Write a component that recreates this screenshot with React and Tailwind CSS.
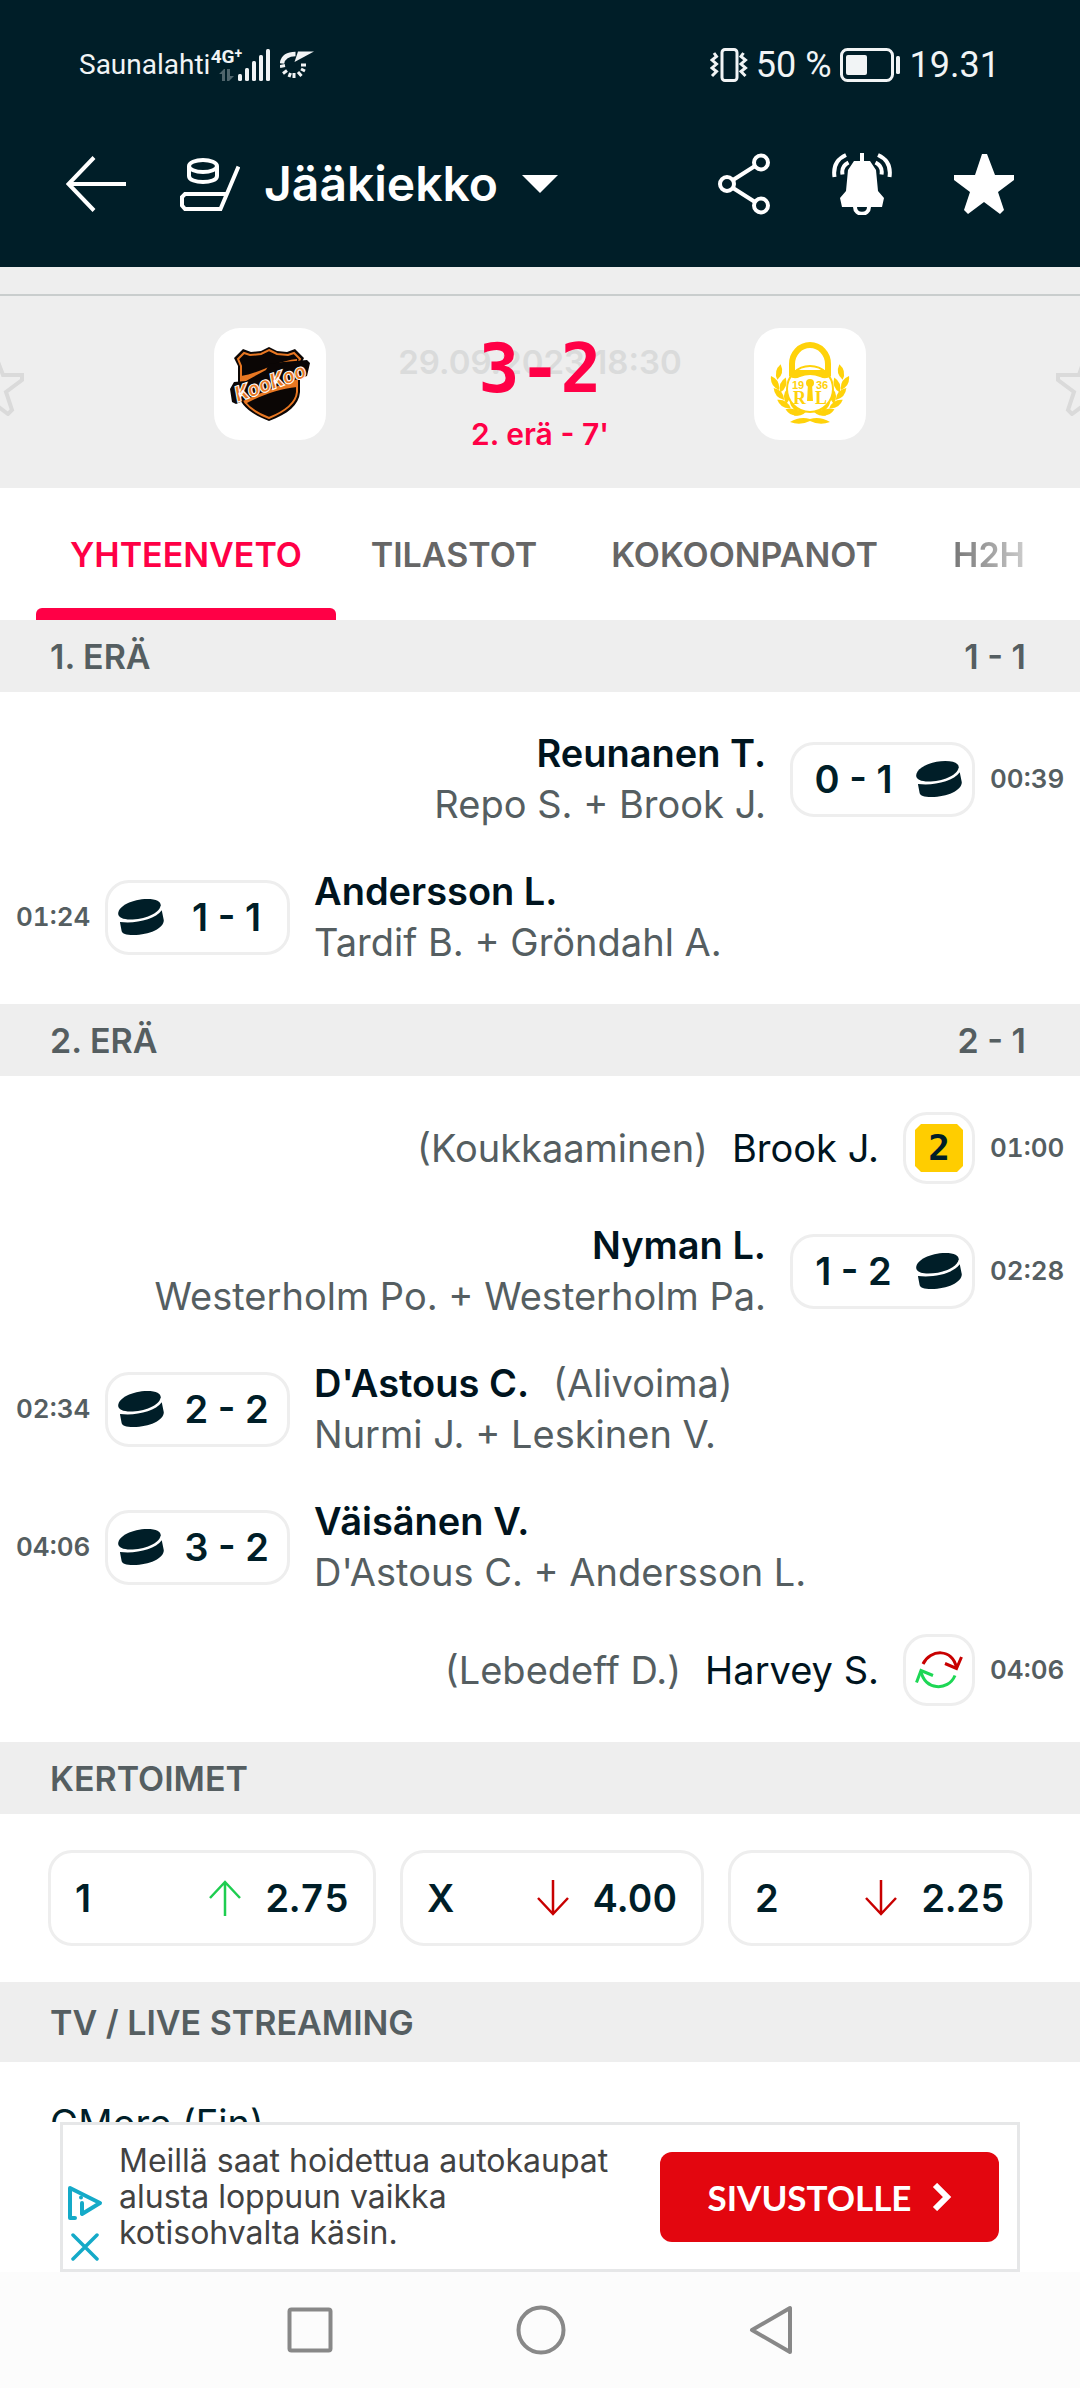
import React from "react";

const starPath =
  "M28 0h5l8 21h19v5L44 38l6 18-4 4-16-12-16 12-4-4 6-18L0 26v-5h21z";

function StatusBar() {
  return (
    <div className="flex h-[130px] items-center justify-between pr-20 pl-[79px] font-[Roboto,sans-serif] text-[#f1f4f5]">
      <div className="flex items-center">
        <span className="text-[28px] leading-8">Saunalahti</span>
        <span className="ml-1 flex h-8 w-6 flex-col items-center text-[19px] leading-4 font-bold">
          <span className="flex">
            4G<span className="text-sm leading-2">+</span>
          </span>
          <svg className="mt-1 h-3 w-4 text-[#50656c]" viewBox="0 0 16 12" fill="currentColor" aria-hidden="true">
            <path d="M1 5 6 0h1v12H4V5zM9 0h3v7h4l-5 5H9z" />
          </svg>
        </span>
        <svg className="h-8 w-[34px]" viewBox="0 0 34 32" fill="currentColor" aria-label="Signaali">
          <rect x="0" y="25" width="4" height="7" rx="1.5" />
          <rect x="7" y="19" width="4" height="13" rx="1.5" />
          <rect x="14" y="12" width="4" height="20" rx="1.5" />
          <rect x="21" y="6" width="4" height="26" rx="1.5" />
          <rect x="28" y="0" width="4" height="32" rx="1.5" />
        </svg>
        <svg className="ml-2 h-7 w-[34px]" viewBox="0 0 34 28" aria-hidden="true">
          <path d="M2 12.500C3 6 8 3 15.500 3" stroke="currentColor" strokeWidth="4.500" fill="none" />
          <path d="M18 0.500h16L14.500 11z" fill="currentColor" />
          <g stroke="currentColor" strokeWidth="3">
            <path d="M0 15.500 5 14.500M3 22.500 7 19.500M9 26l1.500-4M14 27v-5M21.500 25 18 21M25 20l-4-2M26 14h-5" />
          </g>
        </svg>
      </div>
      <div className="flex items-center text-4xl leading-10">
        <svg className="h-[34px] w-[38px]" viewBox="0 0 38 34" fill="none" stroke="currentColor" aria-label="Värinä">
          <rect x="12" y="1.500" width="15" height="31" rx="3" strokeWidth="3" />
          <path d="M4 5l2.500 3.500L2 12l4.500 4L2 20l4.500 3.500L2 28M33.500 5 31 8.500 35.500 12 31 16l4.500 4-4.500 3.500 4.500 4.500" strokeWidth="3" />
        </svg>
        <span className="ml-2">50 %</span>
        <svg className="ml-2 h-[34px] w-[62px]" viewBox="0 0 62 34" fill="none" aria-label="Akku">
          <rect x="1.500" y="1.500" width="51" height="31" rx="6" stroke="currentColor" strokeWidth="3" />
          <rect x="6" y="7" width="21" height="20" rx="2" fill="currentColor" />
          <rect x="56" y="8" width="4" height="18" rx="1.500" fill="currentColor" />
        </svg>
        <span className="ml-2">19.31</span>
      </div>
    </div>
  );
}

function Toolbar() {
  return (
    <div className="flex h-[108px] items-center px-[66px] text-white">
      <button type="button" aria-label="Takaisin">
        <svg className="h-14 w-[60px]" viewBox="0 0 60 56" fill="none" stroke="currentColor" strokeWidth="4">
          <path d="M28 1.500 2.500 28 28 54.500M3 28h57" />
        </svg>
      </button>
      <button type="button" className="ml-[54px] flex items-center">
        <svg className="h-[53px] w-[60px]" viewBox="0 0 60 53" fill="none" stroke="currentColor" strokeWidth="4" aria-hidden="true">
          <ellipse cx="23" cy="8" rx="14" ry="6" />
          <path d="M9 8v10c0 8 28 8 28 0V8" />
          <path d="M58.500 8.500 40.500 51H5l-3-3.500V39l3-3h41" />
        </svg>
        <span className="ml-6 text-5xl leading-none font-semibold">Jääkiekko</span>
        <svg className="ml-6 h-[18px] w-9" viewBox="0 0 36 18" fill="currentColor" aria-hidden="true">
          <path d="M0 0h36L18 18z" />
        </svg>
      </button>
      <div className="ml-auto flex items-center gap-[62px]">
        <button type="button" aria-label="Jaa">
          <svg className="h-[62px] w-[52px]" viewBox="0 0 52 62" fill="none" stroke="currentColor" strokeWidth="4">
            <circle cx="9" cy="31" r="7" />
            <circle cx="43" cy="9.500" r="7" />
            <circle cx="43" cy="52.500" r="7" />
            <path d="m15 27 22-14M15 35l22 14" />
          </svg>
        </button>
        <button type="button" aria-label="Ilmoitukset">
          <svg className="h-[62px] w-[60px]" viewBox="0 0 60 62" fill="none" stroke="currentColor" strokeWidth="4">
            <path
              d="M28 0h4v8h6l6 9 2 21 6 7-2 9H10l-2-9 6-7 2-21 6-9h6z"
              fill="currentColor"
              stroke="none"
            />
            <path d="M23 54c0 9 14 9 14 0" />
            <path d="M14 2C5 6 1 14 2.500 24M46 2c9 4 13 12 11.500 22M16.500 9.500c-5 2.500-7 6.500-6 12M43.500 9.500c5 2.500 7 6.500 6 12" />
          </svg>
        </button>
        <button type="button" aria-label="Suosikki">
          <svg className="h-[62px] w-[60px]" viewBox="0 0 60 60" fill="currentColor">
            <path d={starPath} />
          </svg>
        </button>
      </div>
    </div>
  );
}

function KooKooLogo() {
  return (
    <svg className="h-20 w-20" viewBox="0 0 80 80" role="img" aria-label="KooKoo">
      <path d="M39 3l8 4 10 1 8-3 9 9-4 8v26c-1 13-12 22-31 29C20 70 9 60 8 48V22L4 14l9-9 8 3 10-1z" fill="#0b0605" />
      <path d="M39 6l8 4 11 1 6-2 6 6-3 7v26c-1 11-11 19-28 26C21 67 12 58 11 48V22l-3-7 6-6 6 2 11-1z" fill="none" stroke="#e87722" strokeWidth="2" />
      <path d="M11 32C28 30 46 17 67 15v28C48 45 30 52 15 60z" fill="#e87722" />
      <path d="m0 45 4-7 12-1 20-11 3-6 14-2 24-2 3 3-3 13-24 8-22 9-25 11-4-2z" fill="#0b0605" />
      <text
        x="40"
        y="46"
        transform="rotate(-20 40 38)"
        textAnchor="middle"
        fontFamily="Roboto, sans-serif"
        fontStyle="italic"
        fontWeight="900"
        fontSize="22"
        fill="#e87722"
        stroke="#fff"
        strokeWidth="1"
      >
        KooKoo
      </text>
    </svg>
  );
}

function LukkoLogo() {
  const leaves = [
    [9, 30, -78],
    [5, 41, 60],
    [9, 52, 48],
    [14, 62, 32],
    [23, 70, 20],
    [13, 43, -70],
    [17, 54, -85],
    [24, 63, 60],
    [31, 70, -25],
  ];
  const side = leaves.map(([x, y, r]) => (
    <path key={`${x}-${y}`} d="M-8 0Q0-6 8 0Q0 6-8 0z" transform={`translate(${x} ${y}) rotate(${r})`} />
  ));
  return (
    <svg className="h-[84px] w-20" viewBox="0 0 80 84" fill="#ffd20a" role="img" aria-label="Lukko">
      <g>{side}</g>
      <g transform="translate(80 0) scale(-1 1)">{side}</g>
      <path d="M20 80q10-6 20-3 10-3 20 3-10 4-20-1-10 5-20 1z" />
      <circle cx="40" cy="47" r="23" fill="#fff" stroke="#ffd20a" strokeWidth="2" />
      <path d="M22 31V22a18 19 0 0 1 36 0v9" fill="none" stroke="#ffd20a" strokeWidth="6" />
      <path d="M19 28h42v6q-5 4-11 1-10-4-20 0-6 3-11-1z" />
      <circle cx="40" cy="41" r="4" />
      <path d="M38 42h4l1 17h-6z" />
      <g fontFamily="Liberation Sans, sans-serif" fontWeight="700" fontSize="11">
        <text x="22" y="47">19</text>
        <text x="46" y="47">36</text>
      </g>
      <g fontFamily="Liberation Serif, serif" fontWeight="700" fontSize="18">
        <text x="23" y="62">R</text>
        <text x="45" y="62">L</text>
      </g>
    </svg>
  );
}

function OutlineStar({ className }) {
  return (
    <svg className={className} viewBox="-2 -2 64 64" fill="none" stroke="#dadada" strokeWidth="4" aria-hidden="true">
      <path d={starPath} />
    </svg>
  );
}

function ScoreHeader() {
  return (
    <div className="bg-[#eeeeee] pt-[27px]">
      <div className="relative flex justify-center overflow-hidden border-t-2 border-[#c9cdcd] pt-8 pb-12">
        <OutlineStar className="absolute top-14 -left-10 h-16 w-16" />
        <div className="grid h-28 w-28 place-items-center rounded-[26px] bg-white">
          <KooKooLogo />
        </div>
        <div className="relative flex h-28 w-[428px] flex-col items-center text-[#ff0046]">
          <span className="absolute top-4 text-[33px] leading-9 font-semibold text-[#dadbdb]">29.09.2023 18:30</span>
          <strong className="relative pt-2 font-['DejaVu_Sans_Mono',monospace] text-[68px] leading-[66px] font-bold">3-2</strong>
          <span className="pt-3 text-[30px] leading-10 font-semibold">2. erä - 7'</span>
        </div>
        <div className="grid h-28 w-28 place-items-center rounded-[26px] bg-white">
          <LukkoLogo />
        </div>
        <OutlineStar className="absolute top-14 -right-10 h-16 w-16" />
      </div>
    </div>
  );
}

function Tabs() {
  return (
    <nav className="flex h-[132px] overflow-hidden bg-white pl-9 text-[34px] font-semibold text-[#666666]">
      <button type="button" className="flex w-[300px] shrink-0 flex-col items-center text-[#ff0046]" aria-current="page">
        <span className="flex flex-1 items-center pt-3">YHTEENVETO</span>
        <span className="h-3 w-full rounded-t-md bg-[#ff0046]" />
      </button>
      <button type="button" className="w-[236px] shrink-0">TILASTOT</button>
      <button type="button" className="w-[345px] shrink-0">KOKOONPANOT</button>
      <button type="button" className="w-36 shrink-0">
        <span className="bg-linear-to-r from-[#777777] to-[#cccccc] bg-clip-text text-transparent">H2H</span>
      </button>
    </nav>
  );
}

function SectionHeader({ title, result }) {
  return (
    <div className="flex h-[72px] items-center justify-between bg-[#eeeeee] pr-[54px] pl-[50px] text-[34px] font-semibold text-[#555e61]">
      <h2>{title}</h2>
      {result && <span>{result}</span>}
    </div>
  );
}

function Puck() {
  return (
    <svg className="h-9 w-[46px] shrink-0" viewBox="0 0 133 105" fill="currentColor" aria-label="Maali">
      <path d="M0 44C-2 22 40 0 85 0c27 0 39 8 39 18-3 24-49 42-89 42C14 60 1 54 0 44z" />
      <path d="M5 67c45 6 103-7 122-34l6 29c0 24-43 43-88 43-23 0-33-4-35-12z" />
    </svg>
  );
}

function Swap() {
  return (
    <svg className="h-[38px] w-12" viewBox="0 0 48 38" fill="none" strokeWidth="3" aria-label="Vaihto">
      <g stroke="#c80000">
        <path d="M8 13C15-2 38-3 41.500 17" />
        <path d="m30 12.500 11.500 5L46.500 6" />
      </g>
      <g stroke="#1ed755">
        <path d="M40 24.500C33 41 9 39 6 20" />
        <path d="m18 24.500-12-5L1.500 31.500" />
      </g>
    </svg>
  );
}

function Penalty() {
  return (
    <span className="grid h-12 w-12 place-items-center bg-[#ffcd00] font-['DejaVu_Sans_Mono',monospace] text-4xl leading-none font-bold text-[#001e28] [clip-path:polygon(6px_0,42px_0,100%_6px,100%_42px,42px_100%,6px_100%,0_42px,0_6px)]">
      2
    </span>
  );
}

function EventTime({ away, children }) {
  return (
    <time className={`w-[74px] text-[26px] leading-8 font-semibold text-[#555e61] tabular-nums ${away ? "text-right" : "text-left"}`}>
      {children}
    </time>
  );
}

function GoalRow({ away, time, score, name, note, assists }) {
  return (
    <li className={`flex h-[138px] items-center ${away ? "flex-row-reverse pr-4" : "pl-4"}`}>
      <EventTime away={away}>{time}</EventTime>
      <div
        className={`flex h-[75px] w-[185px] items-center gap-3 rounded-3xl border-3 border-[#eeeeee] px-2.5 text-[#001e28] ${
          away ? "mr-[15px] flex-row-reverse" : "ml-[15px]"
        }`}
      >
        <Puck />
        <span className="flex-1 text-center text-[38px] leading-none font-semibold whitespace-nowrap">{score}</span>
      </div>
      <div className={`text-[38px] leading-[51px] text-[#555e61] ${away ? "mr-6 text-right" : "ml-6"}`}>
        <p>
          <span className="font-semibold text-[#00141e]">{name}</span>
          {note && <span className="ml-6">{note}</span>}
        </p>
        <p>{assists}</p>
      </div>
    </li>
  );
}

function EventRow({ time, note, name, children }) {
  return (
    <li className="flex h-[108px] flex-row-reverse items-center pr-4">
      <EventTime away>{time}</EventTime>
      <div className="mr-[15px] grid h-[72px] w-[72px] place-items-center rounded-3xl border-3 border-[#eeeeee]">{children}</div>
      <p className="mr-6 text-[38px] leading-[51px] text-[#00141e]">
        <span className="mr-6 text-[#555e61]">{note}</span>
        {name}
      </p>
    </li>
  );
}

function Odd({ label, value, up }) {
  return (
    <button
      type="button"
      className="flex h-24 items-center rounded-3xl border-3 border-[#eeeeee] px-6 text-[38px] leading-none font-semibold text-[#001e28]"
    >
      <span className="mr-auto">{label}</span>
      <svg
        className={`h-9 w-8 ${up ? "text-[#1ecd50]" : "rotate-180 text-[#c80000]"}`}
        viewBox="0 0 32 36"
        fill="none"
        stroke="currentColor"
        strokeWidth="2.500"
        aria-hidden="true"
      >
        <path d="M16 36V2M1 18 16 2l15 16" />
      </svg>
      <span className="ml-6 tabular-nums">{value}</span>
    </button>
  );
}

function Ad() {
  return (
    <aside className="mx-[60px] flex h-[150px] items-center border-3 border-[#e6e7e8] bg-white pr-[18px]">
      <div className="mr-3 flex w-11 shrink-0 flex-col items-center gap-3 self-end pb-2 text-[#14aac8]">
        <button type="button" aria-label="Mainosvalinnat">
          <svg className="h-9 w-9" viewBox="0 0 36 36" fill="none" stroke="currentColor" strokeWidth="4" strokeLinejoin="round" strokeLinecap="round">
            <path d="M8 33H3V3l30 15-18 11V18" />
            <path d="M14 12.500v.1" />
          </svg>
        </button>
        <button type="button" aria-label="Sulje mainos">
          <svg className="h-7 w-7" viewBox="0 0 28 28" fill="none" stroke="currentColor" strokeWidth="3.500" strokeLinecap="round">
            <path d="m2 2 24 24M26 2 2 26" />
          </svg>
        </button>
      </div>
      <p className="flex-1 text-[32px] leading-9 text-[#424242]">
        Meillä saat hoidettua autokaupat
        <br />
        alusta loppuun vaikka
        <br />
        kotisohvalta käsin.
      </p>
      <a
        href="#sivustolle"
        className="flex h-[90px] w-[339px] shrink-0 items-center justify-center gap-5 rounded-xl bg-[#e3060f] font-[Lato,sans-serif] text-[35px] font-bold text-white"
      >
        SIVUSTOLLE
        <svg className="h-7 w-5" viewBox="0 0 20 28" fill="none" stroke="currentColor" strokeWidth="6" aria-hidden="true">
          <path d="m3 2 12 12L3 26" />
        </svg>
      </a>
    </aside>
  );
}

function SystemNav() {
  return (
    <nav className="flex flex-1 items-center justify-center gap-[183px] bg-[#fcfcfc] py-8 text-[#888888]">
      <button type="button" aria-label="Viimeisimmät">
        <svg className="h-[46px] w-[46px]" viewBox="0 0 46 46" fill="none" stroke="currentColor" strokeWidth="4">
          <rect x="2.500" y="2.500" width="41" height="41" rx="2" />
        </svg>
      </button>
      <button type="button" aria-label="Koti">
        <svg className="h-[50px] w-[50px]" viewBox="0 0 50 50" fill="none" stroke="currentColor" strokeWidth="4">
          <circle cx="25" cy="25" r="22.500" />
        </svg>
      </button>
      <button type="button" aria-label="Edellinen">
        <svg className="h-[50px] w-11" viewBox="0 0 44 50" fill="none" stroke="currentColor" strokeWidth="4" strokeLinejoin="round">
          <path d="M41 3v44L3 25z" />
        </svg>
      </button>
    </nav>
  );
}

export default function App() {
  return (
    <div className="flex min-h-screen flex-col bg-white font-[Inter,sans-serif]">
      <header className="bg-[#001e28] pb-[29px]">
        <StatusBar />
        <Toolbar />
      </header>
      <ScoreHeader />
      <Tabs />
      <main>
        <SectionHeader title="1. ERÄ" result="1 - 1" />
        <ul className="py-[18px]">
          <GoalRow away time="00:39" score="0 - 1" name="Reunanen T." assists="Repo S. + Brook J." />
          <GoalRow time="01:24" score="1 - 1" name="Andersson L." assists="Tardif B. + Gröndahl A." />
        </ul>
        <SectionHeader title="2. ERÄ" result="2 - 1" />
        <ul className="py-[18px]">
          <EventRow time="01:00" note="(Koukkaaminen)" name="Brook J.">
            <Penalty />
          </EventRow>
          <GoalRow away time="02:28" score="1 - 2" name="Nyman L." assists="Westerholm Po. + Westerholm Pa." />
          <GoalRow time="02:34" score="2 - 2" name="D'Astous C." note="(Alivoima)" assists="Nurmi J. + Leskinen V." />
          <GoalRow time="04:06" score="3 - 2" name="Väisänen V." assists="D'Astous C. + Andersson L." />
          <EventRow time="04:06" note="(Lebedeff D.)" name="Harvey S.">
            <Swap />
          </EventRow>
        </ul>
        <SectionHeader title="KERTOIMET" />
        <div className="grid grid-cols-[328fr_304fr_304fr] gap-6 px-12 py-9">
          <Odd label="1" value="2.75" up />
          <Odd label="X" value="4.00" />
          <Odd label="2" value="2.25" />
        </div>
        <div className="bg-[#eeeeee] py-1">
          <SectionHeader title="TV / LIVE STREAMING" />
        </div>
        <p className="h-[60px] overflow-hidden pt-9 pl-[50px] text-[38px] leading-[51px] text-[#001e28]">GMore (Fin)</p>
      </main>
      <Ad />
      <SystemNav />
    </div>
  );
}
